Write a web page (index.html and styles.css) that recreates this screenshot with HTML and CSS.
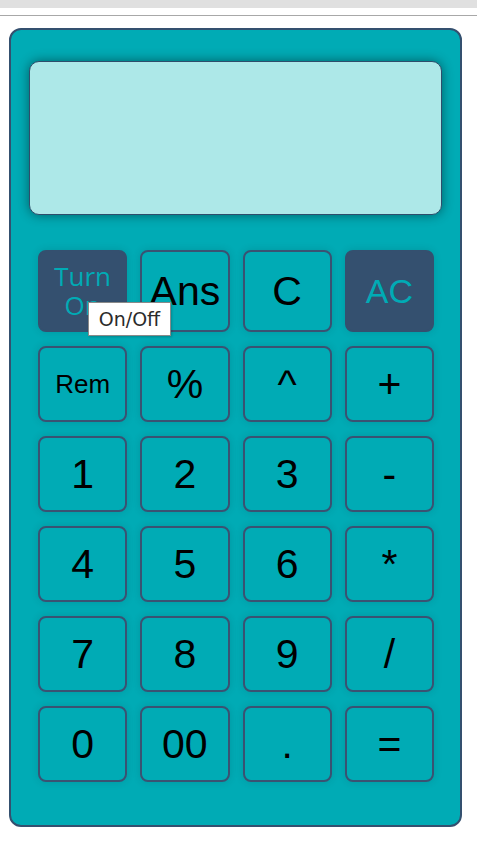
FILE: index.html
```html
<!DOCTYPE html>
<html lang="en">
<head>
    <meta charset="UTF-8">
    <title>Calculator</title>
    <link rel="stylesheet" href="styles.css">
</head>
<body>
<div class="topbar"></div>
<div class="rule"></div>

<div class="calculator">
    <div class="display"></div>

    <div class="keys">
        <button class="key key--dark key--power">Turn On</button>
        <button class="key">Ans</button>
        <button class="key">C</button>
        <button class="key key--dark key--ac">AC</button>

        <button class="key key--small">Rem</button>
        <button class="key">%</button>
        <button class="key">^</button>
        <button class="key">+</button>

        <button class="key">1</button>
        <button class="key">2</button>
        <button class="key">3</button>
        <button class="key">-</button>

        <button class="key">4</button>
        <button class="key">5</button>
        <button class="key">6</button>
        <button class="key">*</button>

        <button class="key">7</button>
        <button class="key">8</button>
        <button class="key">9</button>
        <button class="key">/</button>

        <button class="key">0</button>
        <button class="key">00</button>
        <button class="key">.</button>
        <button class="key">=</button>

        <!-- tooltip of the power key -->
        <span class="tooltip">On/Off</span>
    </div>
</div>
</body>
</html>
```

FILE: styles.css
```css
body {
    margin: 0;
    background-color: #ffffff;
    font-family: "Liberation Sans", Arial, sans-serif;
}

.topbar {
    height: 8px;
    background-color: #e0e0e0;
}

.rule {
    height: 1px;
    margin-top: 7px;
    background-color: #a8a8a8;
}

.calculator {
    box-sizing: border-box;
    width: 453px;
    margin: 12px 0 0 9px;
    padding: 31px 18px 43px;
    border: 2px solid #34506f;
    border-radius: 12px;
    background-color: #00abb5;
}

.display {
    box-sizing: border-box;
    height: 154px;
    border: 1px solid #2f4d6b;
    border-radius: 10px;
    background-color: #ade8e8;
    box-shadow: 0 0 12px rgba(0, 0, 0, 0.45);
}

.keys {
    position: relative;
    display: grid;
    grid-template-columns: repeat(4, 1fr);
    grid-template-rows: 82px repeat(5, 76px);
    column-gap: 13px;
    row-gap: 14px;
    margin-top: 35px;
    padding: 0 8px 0 9px;
}

.key {
    box-sizing: border-box;
    margin: 0;
    padding: 0;
    border: 2px solid #3a5272;
    border-radius: 8px;
    background-color: #00abb5;
    color: #000000;
    font-family: "Liberation Sans", Arial, sans-serif;
    font-size: 41px;
    box-shadow: 0 0 8px rgba(0, 0, 0, 0.12);
    cursor: pointer;
}

.key--dark {
    border-color: #34506f;
    background-color: #34506f;
    color: #00abb5;
}

.key--power {
    padding: 0 14px;
    font-family: "Open Sans", sans-serif;
    font-size: 26px;
    line-height: 1.12;
}

.key--ac {
    font-size: 34px;
}

.key--small {
    font-size: 26px;
}

/* 原生 title 提示的样子 */
.tooltip {
    position: absolute;
    left: 59px;
    top: 52px;
    box-sizing: border-box;
    width: 83px;
    height: 34px;
    border: 1px solid #8a8a8a;
    background-color: #ffffff;
    color: #2b2b2b;
    font-family: "DejaVu Sans", sans-serif;
    font-size: 19px;
    line-height: 32px;
    text-align: center;
    box-shadow: 1px 1px 2px rgba(0, 0, 0, 0.2);
}
```
